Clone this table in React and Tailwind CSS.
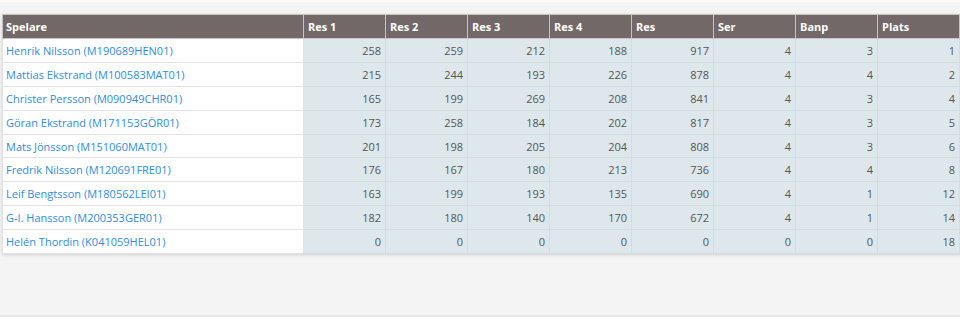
const rows = [
  ['Henrik Nilsson (M190689HEN01)', 258, 259, 212, 188, 917, 4, 3, 1],
  ['Mattias Ekstrand (M100583MAT01)', 215, 244, 193, 226, 878, 4, 4, 2],
  ['Christer Persson (M090949CHR01)', 165, 199, 269, 208, 841, 4, 3, 4],
  ['Göran Ekstrand (M171153GÖR01)', 173, 258, 184, 202, 817, 4, 3, 5],
  ['Mats Jönsson (M151060MAT01)', 201, 198, 205, 204, 808, 4, 3, 6],
  ['Fredrik Nilsson (M120691FRE01)', 176, 167, 180, 213, 736, 4, 4, 8],
  ['Leif Bengtsson (M180562LEI01)', 163, 199, 193, 135, 690, 4, 1, 12],
  ['G-I. Hansson (M200353GER01)', 182, 180, 140, 170, 672, 4, 1, 14],
  ['Helén Thordin (K041059HEL01)', 0, 0, 0, 0, 0, 0, 0, 18],
];

const headers = ['Res 1', 'Res 2', 'Res 3', 'Res 4', 'Res', 'Ser', 'Banp', 'Plats'];

export default function App() {
  return (
    <div className="w-[960px] h-[317px] overflow-hidden bg-[#f4f4f4] border-t-2 border-t-[#fbfbfb] border-b-2 border-b-[#e6e6e6] font-['Open_Sans','Noto_Sans',sans-serif] text-[11px]">
      <div className="pt-[12px] pl-[2px]">
        <table className="border-collapse table-fixed w-[1040px] shadow-[0_1px_3px_rgba(0,0,0,0.15)]">
          <colgroup>
            <col className="w-[301px]" />
            {headers.map((h) => (
              <col key={h} className="w-[82px]" />
            ))}
            <col className="w-[82px]" />
          </colgroup>
          <thead>
            <tr className="bg-[#726868] text-white h-[24px]">
              <th className="text-left font-bold px-[3px] border border-[#c9c3c3] leading-none">Spelare</th>
              {headers.map((h) => (
                <th key={h} className="text-left font-bold px-[4px] border border-[#c9c3c3] leading-none">{h}</th>
              ))}
              <th className="text-left font-bold px-[4px] border border-[#c9c3c3] leading-none"></th>
            </tr>
          </thead>
          <tbody>
            {rows.map((r) => (
              <tr key={r[0]} className="h-[23.9px]">
                <td className="bg-white border border-[#e2e2e2] px-[3px] text-[#2d8de3] whitespace-nowrap leading-none">{r[0]}</td>
                {r.slice(1).map((v, i) => (
                  <td key={i} className="bg-[#dee8ec] border border-[#d3dcdf] px-[4px] text-right text-[#555] leading-none">{v}</td>
                ))}
                <td className="bg-[#dee8ec] border border-[#d3dcdf]"></td>
              </tr>
            ))}
          </tbody>
        </table>
      </div>
    </div>
  );
}
